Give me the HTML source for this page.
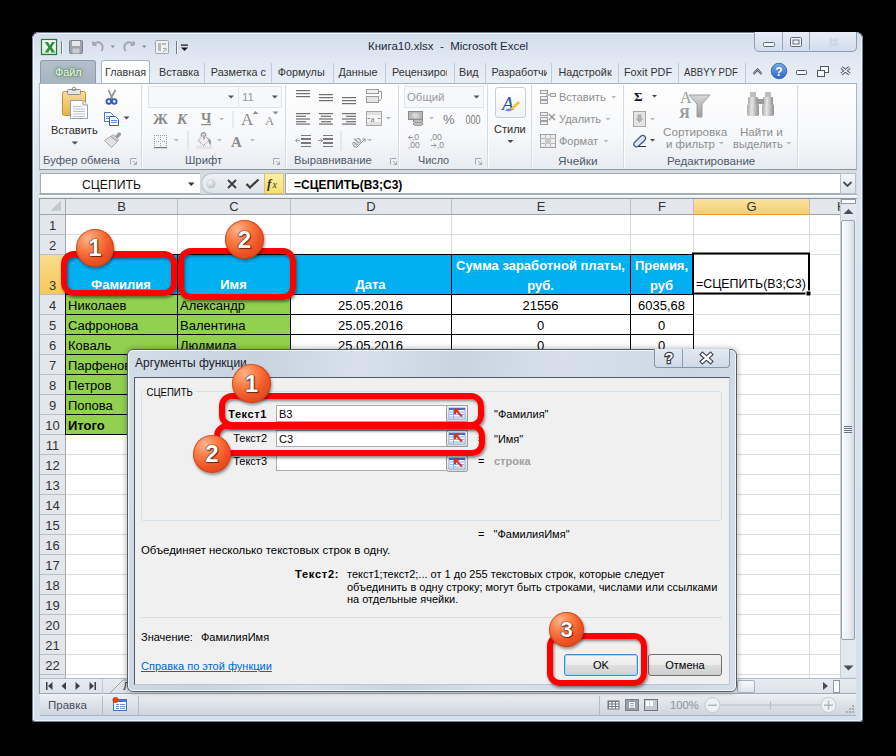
<!DOCTYPE html>
<html><head><meta charset="utf-8">
<style>
*{margin:0;padding:0;box-sizing:border-box}
html,body{width:896px;height:756px;overflow:hidden;background:#000}
body{position:relative;font-family:"Liberation Sans",sans-serif;font-size:12px;color:#222}
.a{position:absolute}
.nw{white-space:nowrap}
#win{left:32px;top:32px;width:831px;height:690px;border-radius:7px 7px 4px 4px;background:linear-gradient(#d2ddea,#dfe7f1 25px,#e9eff6 50px,#dbe5f0 120px,#d3dfec);box-shadow:inset 0 0 0 1px #6e7d90,inset 0 0 0 2px #f3f7fb}
#title{left:368px;top:40.2px;font-size:11.5px;color:#1e2b3a}
.tab{top:60px;height:23px;font-size:12.5px;color:#2f2f2f;text-align:center;line-height:23px;overflow:hidden}
.tdiv{top:63px;width:1px;height:20px;background:#c2cad6}
#ribbon{left:39px;top:83px;width:818px;height:87px;background:linear-gradient(#fefefe,#f7f8fa 60%,#e8ebf0);border:1px solid #aab5c3;border-bottom:1px solid #8d949c}
.gsep{top:85px;width:1px;height:83px;background:#d5dae0;box-shadow:1px 0 0 #fbfcfd}
.gl{top:154px;height:15px;font-size:12px;color:#4b5765;text-align:center}
.cellt{font-size:14px}
.colh{top:199px;height:16px;border-right:1px solid #b9bec5;border-bottom:1px solid #9fa5ad;font-size:13px;color:#333;text-align:center;line-height:15px}
.rowh{left:40px;width:26px;border-right:1px solid #a3a9b1;border-bottom:1px solid #b9bec5;font-size:13px;color:#333;text-align:center}
</style></head><body>

<div id="win" class="a"></div>
<div id="title" class="a nw">Книга10.xlsx&nbsp; - &nbsp;Microsoft Excel</div>

<!-- caption buttons -->
<div class="a" style="left:754px;top:32px;width:103px;height:20px;border:1px solid #8d9cb0;border-top:none;border-radius:0 0 5px 5px;background:linear-gradient(#e6edf6,#d2ddeb)"></div>
<div class="a" style="left:782px;top:32px;width:1px;height:18px;background:#9aa8ba"></div>
<div class="a" style="left:809px;top:32px;width:1px;height:18px;background:#9aa8ba"></div>

<!-- tabs -->
<div class="a" style="left:40px;top:60px;width:56px;height:24px;background:linear-gradient(#b4bfcb,#a8b4c1);border-radius:3px 3px 0 0;border:1px solid #8e9aa8;border-bottom:none"></div>
<div class="a nw" style="left:55px;top:65.5px;font-size:10.8px;color:#f6fff2;text-shadow:0 0 2px #2c6e26,0 0 4px #3d8a35">Файл</div>
<div class="a" style="left:101px;top:60px;width:49px;height:25px;background:linear-gradient(#fff,#fdfdfe);border:1px solid #aab5c3;border-bottom:none;border-radius:3px 3px 0 0"></div>
<div class="a nw" style="left:105px;top:65.5px;font-size:10.8px;color:#333">Главная</div>
<div class="a nw" style="left:159px;top:65.5px;font-size:10.8px;color:#333">Вставка</div>
<div class="a tdiv" style="left:204px"></div>
<div class="a nw" style="left:210.8px;top:65.5px;width:55.5px;overflow:hidden;font-size:10.8px;color:#333">Разметка страницы</div>
<div class="a tdiv" style="left:271px"></div>
<div class="a nw" style="left:277.7px;top:65.5px;width:200px;overflow:hidden;font-size:10.8px;color:#333">Формулы</div>
<div class="a tdiv" style="left:333px"></div>
<div class="a nw" style="left:338.4px;top:65.5px;width:200px;overflow:hidden;font-size:10.8px;color:#333">Данные</div>
<div class="a tdiv" style="left:385px"></div>
<div class="a nw" style="left:392px;top:65.5px;width:55px;overflow:hidden;font-size:10.8px;color:#333">Рецензирование</div>
<div class="a tdiv" style="left:454px"></div>
<div class="a nw" style="left:459px;top:65.5px;width:200px;overflow:hidden;font-size:10.8px;color:#333">Вид</div>
<div class="a tdiv" style="left:485px"></div>
<div class="a nw" style="left:491.4px;top:65.5px;width:55.5px;overflow:hidden;font-size:10.8px;color:#333">Разработчик</div>
<div class="a tdiv" style="left:551px"></div>
<div class="a nw" style="left:558.4px;top:65.5px;width:54px;overflow:hidden;font-size:10.8px;color:#333">Надстройки</div>
<div class="a tdiv" style="left:618px"></div>
<div class="a nw" style="left:624px;top:65.5px;width:200px;overflow:hidden;font-size:10.8px;color:#333">Foxit PDF</div>
<div class="a tdiv" style="left:678px"></div>
<div class="a nw" style="left:684.4px;top:65.5px;width:200px;overflow:hidden;font-size:10.8px;color:#333" ><span style="display:inline-block;transform:scaleX(.89);transform-origin:0 0">ABBYY PDF</span></div>
<div class="a tdiv" style="left:745px"></div>
<!-- ribbon -->
<div id="ribbon" class="a"></div>
<div class="a gsep" style="left:141px"></div>
<div class="a gsep" style="left:285px"></div>
<div class="a gsep" style="left:398px"></div>
<div class="a gsep" style="left:487px"></div>
<div class="a gsep" style="left:531px"></div>
<div class="a gsep" style="left:623px"></div>
<div class="a gsep" style="left:797px"></div>

<!-- formula bar -->
<div class="a" style="left:39px;top:170px;width:818px;height:29px;background:#d6dbe1"></div>
<div class="a" style="left:40px;top:173px;width:160px;height:21px;background:#fff;border:1px solid #a4aab2;border-right:none"></div>
<div class="a nw" style="left:82px;top:178px;font-size:12.2px;color:#111">СЦЕПИТЬ</div>
<div class="a" style="left:201px;top:173px;width:64px;height:21px;background:linear-gradient(#eef1f5,#dfe4ea);border:1px solid #b6bfca;border-right:none;border-radius:11px 0 0 11px"></div>
<div class="a" style="left:264px;top:173px;width:20px;height:21px;background:linear-gradient(#fdf0a6,#f8de6e);border:1px solid #d6c07a"></div>
<div class="a" style="left:285px;top:173px;width:556px;height:21px;background:#fff;border:1px solid #a4aab2"></div>
<div class="a nw" style="left:294px;top:178.4px;font-size:12px;font-weight:bold;color:#000">=СЦЕПИТЬ(B3;C3)</div>
<div class="a" style="left:840px;top:173px;width:16px;height:21px;background:linear-gradient(#f3f5f8,#dfe5ec);border:1px solid #b6bfca"></div>

<!-- grid area -->
<div class="a" style="left:40px;top:199px;width:800px;height:480px;background:#fff"></div>
<style>
.rt{position:absolute;white-space:nowrap;font-size:11.3px;color:#8e8e8e}
.rd{color:#2b2b2b}
.gl2{position:absolute;white-space:nowrap;font-size:11.3px;color:#4f5a68;top:154px}
</style>
<!-- group labels -->
<div class="gl2" style="left:43px">Буфер обмена</div>
<div class="gl2" style="left:185px">Шрифт</div>
<div class="gl2" style="left:294px">Выравнивание</div>
<div class="gl2" style="left:418px;font-size:10.8px">Число</div>
<div class="gl2" style="left:558px;font-size:11.8px">Ячейки</div>
<div class="gl2" style="left:667px;font-size:11.6px">Редактирование</div>
<!-- combos -->
<div class="a" style="left:148px;top:86px;width:91px;height:22px;border:1px solid #dfe4ea;background:#f7f8fa"></div>
<div class="a" style="left:238px;top:86px;width:44px;height:22px;border:1px solid #dfe4ea;background:#f7f8fa"></div>
<div class="a" style="left:404px;top:86px;width:80px;height:22px;border:1px solid #dfe4ea;background:#f7f8fa"></div>
<div class="a" style="left:404px;top:91px;width:80px;height:14px"></div>
<!-- texts -->
<div class="rt rd" style="left:51px;top:124px;font-size:11px">Вставить</div>
<div class="rt" style="left:559px;top:90.5px;font-size:11px">Вставить</div>
<div class="rt" style="left:559px;top:112.5px;font-size:11px">Удалить</div>
<div class="rt" style="left:559px;top:134.5px;font-size:11px">Формат</div>
<div class="rt rd" style="left:494px;top:123px;font-size:11px">Стили</div>
<div class="rt" style="left:663px;top:124.5px;font-size:11.7px">Сортировка</div>
<div class="rt" style="left:666px;top:138px;font-size:11.5px">и фильтр</div>
<div class="rt" style="left:740px;top:124.5px;font-size:11.6px">Найти и</div>
<div class="rt" style="left:733px;top:138px;font-size:11.1px">выделить</div>
<div class="rt" style="left:407px;top:91px;font-size:11.4px;color:#9a9a9a">Общий</div>
<div class="rt" style="left:242px;top:91px;font-size:11.4px;color:#9a9a9a">11</div>
<!-- styles button -->
<div class="a" style="left:495px;top:87px;width:31px;height:31px;border:1px solid #c9ced5;border-radius:3px;background:linear-gradient(#fff,#f1f3f6)"></div>
<svg class="a" style="left:0;top:0" width="896" height="200">
<defs>
<linearGradient id="gBoard" x1="0" y1="0" x2="0" y2="1"><stop offset="0" stop-color="#f8dc98"/><stop offset="1" stop-color="#e8b24e"/></linearGradient>
<linearGradient id="gGray" x1="0" y1="0" x2="0" y2="1"><stop offset="0" stop-color="#d8d8d8"/><stop offset="1" stop-color="#9a9a9a"/></linearGradient>
<linearGradient id="gBin" x1="0" y1="0" x2="1" y2="0"><stop offset="0" stop-color="#a9a9a9"/><stop offset=".4" stop-color="#e6e6e6"/><stop offset="1" stop-color="#8f8f8f"/></linearGradient>
</defs>
<!-- paste -->
<rect x="62.5" y="91.5" width="23" height="24" rx="2" fill="url(#gBoard)" stroke="#c4913a"/>
<rect x="67.5" y="89.5" width="13" height="5" rx="1" fill="#e4e4e4" stroke="#8d8d8d"/>
<circle cx="74" cy="89" r="1.8" fill="none" stroke="#8d8d8d"/>
<path d="M70.5 100.5 H83 L87.5 105 V118.5 H70.5 Z" fill="#fff" stroke="#98a0aa"/>
<path d="M83 100.5 V105 H87.5" fill="#e8ecf0" stroke="#98a0aa"/>
<g fill="#b9c2cc"><rect x="73" y="106" width="9" height="1"/><rect x="73" y="108.5" width="12" height="1"/><rect x="73" y="111" width="12" height="1"/><rect x="73" y="113.5" width="12" height="1"/><rect x="73" y="116" width="12" height="1"/></g>
<path d="M71.5 141.5 H78 L74.75 144.5 Z" fill="#4a4a4a"/>
<!-- scissors -->
<path d="M108.5 90 L112.5 99 M115.5 90 L110.5 99" stroke="#8a8f96" stroke-width="1.6"/>
<circle cx="108.8" cy="101.5" r="2.3" fill="none" stroke="#2d58b8" stroke-width="1.8"/>
<circle cx="114.3" cy="101.5" r="2.3" fill="none" stroke="#2d58b8" stroke-width="1.8"/>
<!-- copy -->
<path d="M104.5 112.5 H110.5 L113.5 115.5 V121.5 H104.5 Z" fill="#fff" stroke="#4a74c9"/>
<path d="M109.5 116.5 H115.5 L118.5 119.5 V125.5 H109.5 Z" fill="#fff" stroke="#2f5cb8"/>
<g fill="#5a86d6"><rect x="106" y="116" width="3" height="1"/><rect x="106" y="118" width="3" height="1"/><rect x="111" y="120" width="6" height="1"/><rect x="111" y="122" width="6" height="1"/></g>
<path d="M123.5 116.5 H129.5 L126.5 119.5 Z" fill="#4a4a4a"/>
<!-- format painter -->
<path d="M116 137.5 L119.3 134.2" stroke="#9c9c9c" stroke-width="3.6" stroke-linecap="round"/>
<path d="M110.5 136.5 L113.5 134.5 L118.5 139.5 L117.5 141.5 Z" fill="#cfcfcf" stroke="#a4a4a4" stroke-width=".8"/>
<path d="M104.5 140.5 L110.5 136.5 L117.5 141.5 L111.5 147.5 Z" fill="#e4e1e5" stroke="#a8a8a8"/>
<!-- launchers -->
<g fill="none" stroke="#a4aab2" stroke-width="1">
<path d="M130.5 164.5 V158.5 H136.5 M133 161 L136.5 164.5 M136.5 161.5 V164.5 H133.5"/>
<path d="M273.5 164.5 V158.5 H279.5 M276 161 L279.5 164.5 M279.5 161.5 V164.5 H276.5"/>
<path d="M390.5 164.5 V158.5 H396.5 M393 161 L396.5 164.5 M396.5 161.5 V164.5 H393.5"/>
<path d="M475.5 164.5 V158.5 H481.5 M478 161 L481.5 164.5 M481.5 161.5 V164.5 H478.5"/>
</g>
<!-- font group -->
<g fill="#555">
<path d="M228 95.5 H234 L231 98.5 Z"/><path d="M271.8 95.5 H277.8 L274.8 98.5 Z"/>
</g>
<g fill="#b5b9bf">
<path d="M219 118 H224 L221.5 120.5 Z"/><path d="M173.8 139 H178.8 L176.3 141.5 Z"/><path d="M217 139 H222 L219.5 141.5 Z"/><path d="M250 139 H255 L252.5 141.5 Z"/>
<path d="M386 117 H391 L388.5 119.5 Z"/><path d="M367.2 139 H372.2 L369.7 141.5 Z"/><path d="M429.1 117 H434.1 L431.6 119.5 Z"/>
<path d="M611.2 96 H616.2 L613.7 98.5 Z"/><path d="M605.5 118 H610.5 L608 120.5 Z"/><path d="M603.5 140 H608.5 L606 142.5 Z"/>
<path d="M650 118 H655 L652.5 120.5 Z"/><path d="M718.9 142 H723.9 L721.4 144.5 Z"/><path d="M786.2 142 H791.2 L788.7 144.5 Z"/>
</g>
<rect x="232.5" y="111" width="1" height="17" fill="#d5d9de"/>
<rect x="187.5" y="131" width="1" height="20" fill="#d5d9de"/>
<rect x="340.5" y="131" width="1" height="20" fill="#d5d9de"/>
<text x="153" y="124" font-family="Liberation Serif" font-weight="bold" font-size="15" fill="#8c8c8c">Ж</text>
<text x="177" y="124" font-family="Liberation Serif" font-weight="bold" font-style="italic" font-size="15" fill="#8c8c8c">К</text>
<text x="201" y="123" font-family="Liberation Serif" font-weight="bold" font-size="14" fill="#8c8c8c">Ч</text>
<rect x="201" y="124" width="10" height="1.2" fill="#8c8c8c"/>
<text x="241" y="125" font-family="Liberation Serif" font-size="17" fill="#8c8c8c">A</text>
<path d="M252.5 114 L255.5 111 L258.5 114 Z" fill="#8c8c8c"/>
<text x="265" y="125" font-family="Liberation Serif" font-size="12.5" fill="#8c8c8c">A</text>
<path d="M272.5 111.5 H278.5 L275.5 114.5 Z" fill="#8c8c8c"/>
<!-- borders icon -->
<g fill="#9a9a9a"><rect x="154" y="135" width="1" height="1"/><rect x="156" y="135" width="1" height="1"/><rect x="158" y="135" width="1" height="1"/><rect x="160" y="135" width="1" height="1"/><rect x="162" y="135" width="1" height="1"/><rect x="164" y="135" width="1" height="1"/>
<rect x="154" y="141" width="1" height="1"/><rect x="156" y="141" width="1" height="1"/><rect x="158" y="141" width="1" height="1"/><rect x="162" y="141" width="1" height="1"/><rect x="164" y="141" width="1" height="1"/><rect x="166" y="141" width="1" height="1"/>
<rect x="154" y="137" width="1" height="1"/><rect x="154" y="139" width="1" height="1"/><rect x="154" y="143" width="1" height="1"/><rect x="154" y="145" width="1" height="1"/>
<rect x="166" y="135" width="1" height="1"/><rect x="166" y="137" width="1" height="1"/><rect x="166" y="139" width="1" height="1"/><rect x="166" y="143" width="1" height="1"/><rect x="166" y="145" width="1" height="1"/>
<rect x="160" y="137" width="1" height="1"/><rect x="160" y="139" width="1" height="1"/><rect x="160" y="143" width="1" height="1"/><rect x="160" y="145" width="1" height="1"/>
</g>
<rect x="154" y="147" width="13" height="1.2" fill="#777"/>
<!-- fill bucket -->
<rect x="196" y="145.5" width="16" height="3.3" fill="#e9e3e7"/>
<path d="M198 140.4 L203.5 135 L209.5 140 L203.5 145.5 Z" fill="#f2eef2" stroke="#8c8c8c" stroke-dasharray="1.2 .6"/>
<path d="M201.2 136.5 Q201 132.8 203.3 132.6 Q205.8 132.6 205.8 136" fill="none" stroke="#8f8f8f" stroke-width="1.2"/>
<path d="M204 135.5 V139.5" stroke="#a0a0a0" stroke-width="1.6"/>
<path d="M208.5 138 Q212.2 140 210.6 145.5 Q208.3 143.5 208.4 140.5 Z" fill="#9a9a9a"/>
<text x="231" y="147" font-family="Liberation Serif" font-weight="bold" font-size="15" fill="#8c8c8c">A</text>
<!-- alignment -->
<g fill="#6f6f6f">
<rect x="296" y="90" width="14" height="1.2"/><rect x="296" y="93" width="14" height="1.2"/><rect x="296" y="96" width="14" height="1.2"/>
<rect x="319" y="94" width="14" height="1.2"/><rect x="319" y="97" width="14" height="1.2"/><rect x="319" y="100" width="14" height="1.2"/>
<rect x="342" y="97" width="14" height="1.2"/><rect x="342" y="100" width="14" height="1.2"/><rect x="342" y="103" width="14" height="1.2"/>
<rect x="296" y="113" width="14" height="1.2"/><rect x="296" y="115.7" width="10" height="1.2"/><rect x="296" y="118.4" width="14" height="1.2"/><rect x="296" y="121.1" width="10" height="1.2"/><rect x="296" y="123.5" width="14" height="1.2"/>
<rect x="319" y="113" width="14" height="1.2"/><rect x="321" y="115.7" width="10" height="1.2"/><rect x="319" y="118.4" width="14" height="1.2"/><rect x="321" y="121.1" width="10" height="1.2"/><rect x="319" y="123.5" width="14" height="1.2"/>
<rect x="342" y="113" width="14" height="1.2"/><rect x="346" y="115.7" width="10" height="1.2"/><rect x="342" y="118.4" width="14" height="1.2"/><rect x="346" y="121.1" width="10" height="1.2"/><rect x="342" y="123.5" width="14" height="1.2"/>
</g>
<!-- wrap text -->
<rect x="366.5" y="89.5" width="12" height="4" fill="#f0f0f0" stroke="#9a9a9a"/>
<rect x="366.5" y="96.5" width="12" height="6" fill="#e6e6e6" stroke="#9a9a9a"/>
<path d="M378.5 91.5 H381.5 V99 L379 101" fill="none" stroke="#9a9a9a"/>
<!-- merge -->
<rect x="366.5" y="111.5" width="15" height="14" fill="#e0e0e0" stroke="#a5a5a5"/>
<rect x="367" y="115" width="14" height="7" fill="#f4f4f4"/>
<text x="370.5" y="121.5" font-family="Liberation Serif" font-size="9" fill="#7a7a7a">a</text>
<path d="M367.5 118.5 H370 M378 118.5 H380.5" stroke="#8a8a8a"/>
<!-- indent -->
<g fill="#7a7a7a">
<rect x="301" y="135" width="10" height="1"/><rect x="301" y="138" width="10" height="2"/><rect x="301" y="142" width="10" height="2"/><rect x="301" y="146" width="10" height="1"/>
<rect x="323" y="135" width="10" height="1"/><rect x="323" y="138" width="10" height="2"/><rect x="323" y="142" width="10" height="2"/><rect x="323" y="146" width="10" height="1"/>
</g>
<path d="M300 140.5 H295.5 M297.5 138.5 L295.5 140.5 L297.5 142.5" fill="none" stroke="#9a9a9a"/>
<path d="M318 140.5 H322.5 M320.5 138.5 L322.5 140.5 L320.5 142.5" fill="none" stroke="#9a9a9a"/>
<!-- ab -->
<text x="350" y="145" font-family="Liberation Sans" font-size="9.5" fill="#8a8a8a" transform="rotate(-45 356 141)">ab</text>
<path d="M356 148 L365 139 M362 139 H365 V142" fill="none" stroke="#9a9a9a"/>
<!-- number -->
<path d="M473.5 95.5 H479.5 L476.5 98.5 Z" fill="#555"/>
<rect x="408.5" y="111.5" width="14" height="8" fill="#b8b8b8" stroke="#8a8a8a"/>
<ellipse cx="415.5" cy="115.5" rx="3.5" ry="2.5" fill="#d8d8d8"/>
<ellipse cx="418" cy="121" rx="5" ry="1.5" fill="#c8c8c8" stroke="#8f8f8f"/>
<ellipse cx="418" cy="124" rx="5" ry="1.5" fill="#c8c8c8" stroke="#8f8f8f"/>
<text x="443" y="124" font-family="Liberation Sans" font-size="13" fill="#7a7a7a">%</text>
<text x="465.5" y="124" font-family="Liberation Sans" font-size="12" fill="#7a7a7a" textLength="15" lengthAdjust="spacingAndGlyphs">000</text>
<text x="412" y="140" font-family="Liberation Sans" font-size="8.5" fill="#8a8a8a">,0</text>
<path d="M413 137.5 H408.5 M410.5 135.5 L408.5 137.5 L410.5 139.5" fill="none" stroke="#9a9a9a"/>
<text x="408" y="148" font-family="Liberation Sans" font-size="8.5" fill="#8a8a8a">,00</text>
<text x="430" y="140" font-family="Liberation Sans" font-size="8.5" fill="#8a8a8a">,00</text>
<text x="437" y="148" font-family="Liberation Sans" font-size="8.5" fill="#8a8a8a">,0</text>
<path d="M431 145.5 H436 M434 143.5 L436 145.5 L434 147.5" fill="none" stroke="#9a9a9a"/>
<!-- styles A -->
<text x="502" y="110" font-family="Liberation Serif" font-style="italic" font-size="19" fill="#2d55a8">A</text>
<path d="M509 110 L518 101 L520 103 L511 111 Z" fill="#f1c232"/>
<path d="M505 110.5 Q509 107 512 110 Q509 112 505 110.5 Z" fill="#5d88d8"/>
<path d="M507.5 140 H513.5 L510.5 143 Z" fill="#4a4a4a"/>
<!-- cells icons -->
<g fill="#eee" stroke="#a0a0a0">
<rect x="540.5" y="90.5" width="7" height="3"/><rect x="540.5" y="96.5" width="7" height="3"/><rect x="540.5" y="100.5" width="7" height="3"/>
<rect x="550.5" y="93.5" width="5" height="3"/>
<rect x="540.5" y="112.5" width="7" height="3"/><rect x="540.5" y="117.5" width="7" height="3"/><rect x="540.5" y="121.5" width="7" height="3"/>
<rect x="540.5" y="134.5" width="15" height="13"/>
</g>
<path d="M546 95 H550" stroke="#8a8a8a"/>
<path d="M549 114 L555 120 M555 114 L549 120" stroke="#9a9a9a" stroke-width="1.5"/>
<path d="M545.5 134.5 V147.5 M550.5 134.5 V147.5 M540.5 138.5 H555.5 M540.5 143.5 H555.5" stroke="#b8b8b8"/>
<rect x="545" y="138" width="6" height="6" fill="#c8c8c8"/>
<!-- editing -->
<text x="634" y="101" font-family="Liberation Serif" font-weight="bold" font-size="13" fill="#111">Σ</text>
<path d="M652 95 H657 L654.5 97.5 Z" fill="#444"/>
<rect x="633.5" y="111.5" width="12" height="15" fill="#e4e4e4" stroke="#a8a8a8"/>
<path d="M637.5 114.5 H641.5 V118.5 H643.5 L639.5 123 L635.5 118.5 H637.5 Z" fill="#b0b0b0"/>
<path d="M634 143 L641 136 Q643 134.5 645 136.5 Q646.5 138.5 644.5 140.5 L638 146.5 Q636 147.5 634.5 146 Q633 144.5 634 143 Z" fill="#dfe6f2" stroke="#3d5590" stroke-width="1.2"/>
<rect x="638" y="146" width="8" height="1" fill="#333"/>
<path d="M650 139 H655 L652.5 141.5 Z" fill="#444"/>
<!-- sort -->
<text x="680" y="103" font-family="Liberation Serif" font-size="16" fill="#9a9a9a">A</text>
<text x="679" y="118" font-family="Liberation Serif" font-weight="bold" font-size="15" fill="#9a9a9a">Я</text>
<path d="M689 95 H710 L702 104 V117 H697 V104 Z" fill="url(#gGray)" stroke="#9e9e9e"/>
<!-- binoculars -->
<rect x="750" y="92" width="6" height="6" rx="1" fill="#bdbdbd"/>
<rect x="765" y="92" width="6" height="6" rx="1" fill="#bdbdbd"/>
<rect x="748" y="97" width="10" height="9" rx="1" fill="url(#gBin)"/>
<rect x="763" y="97" width="10" height="9" rx="1" fill="url(#gBin)"/>
<rect x="757" y="99" width="7" height="5" fill="#9a9a9a"/>
<rect x="747" y="104" width="12" height="12" rx="2" fill="url(#gBin)"/>
<rect x="762" y="104" width="12" height="12" rx="2" fill="url(#gBin)"/>
</svg>
<svg class="a" style="left:0;top:0" width="896" height="200">
<defs>
<linearGradient id="gHelp" x1="0" y1="0" x2="0" y2="1"><stop offset="0" stop-color="#79a8ec"/><stop offset="1" stop-color="#2f64c4"/></linearGradient>
<linearGradient id="gXl" x1="0" y1="0" x2="0" y2="1"><stop offset="0" stop-color="#ffffff"/><stop offset="1" stop-color="#d9ecd9"/></linearGradient>
</defs>
<!-- QAT -->
<rect x="41.5" y="39.5" width="15" height="15" fill="url(#gXl)" stroke="#1f7a35" stroke-width="1.2"/>
<path d="M44.5 42 H48 L50 45.5 L52 42 H55 L51.7 47.2 L55.2 52.5 H51.7 L50 49.2 L48.2 52.5 H44.7 L48.3 47.2 Z" fill="#2c8f3c"/>
<rect x="61" y="41" width="1" height="13" fill="#6f7a88"/>
<rect x="62" y="41" width="1" height="13" fill="#f4f8fc"/>
<rect x="69.5" y="40.5" width="13" height="13" rx="1" fill="#9da3aa" stroke="#7c838c"/>
<rect x="72" y="41" width="8" height="5" fill="#e6e8ea"/>
<rect x="72.5" y="48.5" width="7" height="5" fill="#c8ccd0"/>
<path d="M93 45 Q97 40.5 101 43.5 Q104 46.5 101.5 51 M93 45 V41.5 M93 45 H96.5" fill="none" stroke="#a3a9b0" stroke-width="2"/>
<path d="M110.5 45.5 H115 L112.75 48 Z" fill="#8a9099"/>
<path d="M134 45 Q130 40.5 126 43.5 Q123 46.5 125.5 51 M134 45 V41.5 M134 45 H130.5" fill="none" stroke="#a3a9b0" stroke-width="2"/>
<path d="M142 45.5 H146.5 L144.25 48 Z" fill="#8a9099"/>
<rect x="155.5" y="40.5" width="13" height="13" rx="1" fill="#eef0f2" stroke="#9da3aa"/>
<rect x="158" y="43" width="3" height="8" fill="#b5bac0"/><rect x="162" y="43" width="4" height="2" fill="#b5bac0"/>
<path d="M163 48.5 H166 V51 M165 50 L163 52" fill="none" stroke="#9da3aa"/>
<rect x="176" y="41" width="1" height="13" fill="#6f7a88"/>
<rect x="177" y="41" width="1" height="13" fill="#f4f8fc"/>
<rect x="181" y="44.5" width="7" height="1.2" fill="#111"/>
<path d="M181 47.5 H188 L184.5 51 Z" fill="#111"/>
<!-- caption glyphs -->
<rect x="763.5" y="42.5" width="11" height="4" rx="1" fill="#f2f5f8" stroke="#5e6a78"/>
<rect x="790.5" y="37.5" width="11" height="9" rx="1" fill="#f2f5f8" stroke="#5e6a78"/>
<rect x="793" y="40" width="6" height="4" fill="none" stroke="#5e6a78"/>
<path d="M829.5 38.5 L837.5 46 M837.5 38.5 L829.5 46" stroke="#bcc6d2" stroke-width="3"/>
<path d="M829.5 38.5 L837.5 46 M837.5 38.5 L829.5 46" stroke="#dfe6ee" stroke-width="1.4"/>
<!-- tab row icons -->
<path d="M753.5 74 L757.5 69.5 L761.5 74" fill="none" stroke="#333c48" stroke-width="2"/>
<path d="M753.5 74 L757.5 69.5 L761.5 74" fill="none" stroke="#f4f6f8" stroke-width=".7"/>
<circle cx="779" cy="71" r="7.8" fill="url(#gHelp)" stroke="#2d5db3" stroke-width=".8"/>
<text x="779" y="75.5" text-anchor="middle" font-family="Liberation Sans" font-weight="bold" font-size="12" fill="#fff">?</text>
<rect x="796.5" y="70.5" width="10" height="4" rx="1" fill="#f4f6f8" stroke="#4c5562"/>
<rect x="820.5" y="66.5" width="8" height="6" fill="#f4f6f8" stroke="#4c5562"/>
<rect x="817.5" y="70.5" width="7" height="6" fill="#f4f6f8" stroke="#4c5562"/>
<path d="M841.5 67.5 L849.5 74 M849.5 67.5 L841.5 74" stroke="#4c5562" stroke-width="3.4"/>
<path d="M841.5 67.5 L849.5 74 M849.5 67.5 L841.5 74" stroke="#f4f6f8" stroke-width="1.4"/>
<!-- formula bar -->
<path d="M188 182.5 H194.5 L191.25 186 Z" fill="#333"/>
<radialGradient id="gDot" cx=".4" cy=".35" r=".7"><stop offset="0" stop-color="#f4f5f6"/><stop offset="1" stop-color="#b9bdc2"/></radialGradient><circle cx="211" cy="183.7" r="4.5" fill="url(#gDot)"/>
<path d="M228 180 L236 188 M236 180 L228 188" stroke="#3a3a3a" stroke-width="1.8"/>
<path d="M246.5 184 L250 187.5 L258.5 179.5" fill="none" stroke="#3a3a3a" stroke-width="2.2"/>
<text x="267" y="188" font-family="Liberation Serif" font-style="italic" font-weight="bold" font-size="13" fill="#333">f</text>
<text x="272.5" y="188" font-family="Liberation Serif" font-style="italic" font-size="10" fill="#333">x</text>
<path d="M843.5 182 L847.5 186 L851.5 182" fill="none" stroke="#4a4f57" stroke-width="1.8"/>
</svg>
<svg class="a" style="left:0;top:0" width="896" height="756"><rect x="66" y="234" width="774" height="1" fill="#dadcdd"/><rect x="66" y="254" width="774" height="1" fill="#dadcdd"/><rect x="66" y="294" width="774" height="1" fill="#dadcdd"/><rect x="66" y="314" width="774" height="1" fill="#dadcdd"/><rect x="66" y="334" width="774" height="1" fill="#dadcdd"/><rect x="66" y="354" width="774" height="1" fill="#dadcdd"/><rect x="66" y="374" width="774" height="1" fill="#dadcdd"/><rect x="66" y="394" width="774" height="1" fill="#dadcdd"/><rect x="66" y="414" width="774" height="1" fill="#dadcdd"/><rect x="66" y="434" width="774" height="1" fill="#dadcdd"/><rect x="66" y="454" width="774" height="1" fill="#dadcdd"/><rect x="66" y="474" width="774" height="1" fill="#dadcdd"/><rect x="66" y="494" width="774" height="1" fill="#dadcdd"/><rect x="66" y="514" width="774" height="1" fill="#dadcdd"/><rect x="66" y="534" width="774" height="1" fill="#dadcdd"/><rect x="66" y="554" width="774" height="1" fill="#dadcdd"/><rect x="66" y="574" width="774" height="1" fill="#dadcdd"/><rect x="66" y="594" width="774" height="1" fill="#dadcdd"/><rect x="66" y="614" width="774" height="1" fill="#dadcdd"/><rect x="66" y="634" width="774" height="1" fill="#dadcdd"/><rect x="66" y="654" width="774" height="1" fill="#dadcdd"/><rect x="66" y="674" width="774" height="1" fill="#dadcdd"/><rect x="177" y="214" width="1" height="465" fill="#dadcdd"/><rect x="290" y="214" width="1" height="465" fill="#dadcdd"/><rect x="451" y="214" width="1" height="465" fill="#dadcdd"/><rect x="630" y="214" width="1" height="465" fill="#dadcdd"/><rect x="693" y="214" width="1" height="465" fill="#dadcdd"/><rect x="809" y="214" width="1" height="465" fill="#dadcdd"/><rect x="840" y="214" width="1" height="465" fill="#dadcdd"/></svg>
<div class="a" style="left:39px;top:194px;width:818px;height:5px;background:linear-gradient(#fff,#e3e9f2);border-top:1px solid #a9b0b9;border-bottom:1px solid #8f969e"></div>
<div class="a" style="left:39px;top:199px;width:1px;height:495px;background:#8f969e"></div>
<div class="a" style="left:40px;top:199px;width:26px;height:16px;background:#e3e6eb;border-right:1px solid #a3a9b1;border-bottom:1px solid #9fa5ad"></div>
<svg class="a" style="left:50px;top:200px" width="12" height="12"><path d="M11 0.5 L11 10.7 L0.5 10.7 Z" fill="#c4c8cd"/></svg>
<div class="a colh" style="left:66px;width:112px;background:#e3e6eb;border-bottom-color:#9fa5ad">B</div>
<div class="a colh" style="left:178px;width:113px;background:#e3e6eb;border-bottom-color:#9fa5ad">C</div>
<div class="a colh" style="left:291px;width:161px;background:#e3e6eb;border-bottom-color:#9fa5ad">D</div>
<div class="a colh" style="left:452px;width:179px;background:#e3e6eb;border-bottom-color:#9fa5ad">E</div>
<div class="a colh" style="left:631px;width:63px;background:#e3e6eb;border-bottom-color:#9fa5ad">F</div>
<div class="a colh" style="left:694px;width:116px;background:linear-gradient(#f9e3a3,#f5cf6e);border-bottom-color:#f29436">G</div>
<div class="a colh" style="left:810px;width:31px;background:#e3e6eb;border-bottom-color:#9fa5ad"></div>
<div class="a rowh" style="top:215px;height:20px;background:#e3e6eb;border-right-color:#a3a9b1;line-height:20px;padding-top:1px">1</div>
<div class="a rowh" style="top:235px;height:20px;background:#e3e6eb;border-right-color:#a3a9b1;line-height:20px;padding-top:1px">2</div>
<div class="a rowh" style="top:255px;height:40px;background:linear-gradient(#f9dc8c,#f5c95c);border-right-color:#f29436;line-height:20px;padding-top:21px">3</div>
<div class="a rowh" style="top:295px;height:20px;background:#e3e6eb;border-right-color:#a3a9b1;line-height:20px;padding-top:1px">4</div>
<div class="a rowh" style="top:315px;height:20px;background:#e3e6eb;border-right-color:#a3a9b1;line-height:20px;padding-top:1px">5</div>
<div class="a rowh" style="top:335px;height:20px;background:#e3e6eb;border-right-color:#a3a9b1;line-height:20px;padding-top:1px">6</div>
<div class="a rowh" style="top:355px;height:20px;background:#e3e6eb;border-right-color:#a3a9b1;line-height:20px;padding-top:1px">7</div>
<div class="a rowh" style="top:375px;height:20px;background:#e3e6eb;border-right-color:#a3a9b1;line-height:20px;padding-top:1px">8</div>
<div class="a rowh" style="top:395px;height:20px;background:#e3e6eb;border-right-color:#a3a9b1;line-height:20px;padding-top:1px">9</div>
<div class="a rowh" style="top:415px;height:20px;background:#e3e6eb;border-right-color:#a3a9b1;line-height:20px;padding-top:1px">10</div>
<div class="a rowh" style="top:435px;height:20px;background:#e3e6eb;border-right-color:#a3a9b1;line-height:20px;padding-top:1px">11</div>
<div class="a rowh" style="top:455px;height:20px;background:#e3e6eb;border-right-color:#a3a9b1;line-height:20px;padding-top:1px">12</div>
<div class="a rowh" style="top:475px;height:20px;background:#e3e6eb;border-right-color:#a3a9b1;line-height:20px;padding-top:1px">13</div>
<div class="a rowh" style="top:495px;height:20px;background:#e3e6eb;border-right-color:#a3a9b1;line-height:20px;padding-top:1px">14</div>
<div class="a rowh" style="top:515px;height:20px;background:#e3e6eb;border-right-color:#a3a9b1;line-height:20px;padding-top:1px">15</div>
<div class="a rowh" style="top:535px;height:20px;background:#e3e6eb;border-right-color:#a3a9b1;line-height:20px;padding-top:1px">16</div>
<div class="a rowh" style="top:555px;height:20px;background:#e3e6eb;border-right-color:#a3a9b1;line-height:20px;padding-top:1px">17</div>
<div class="a rowh" style="top:575px;height:20px;background:#e3e6eb;border-right-color:#a3a9b1;line-height:20px;padding-top:1px">18</div>
<div class="a rowh" style="top:595px;height:20px;background:#e3e6eb;border-right-color:#a3a9b1;line-height:20px;padding-top:1px">19</div>
<div class="a rowh" style="top:615px;height:20px;background:#e3e6eb;border-right-color:#a3a9b1;line-height:20px;padding-top:1px">20</div>
<div class="a rowh" style="top:635px;height:20px;background:#e3e6eb;border-right-color:#a3a9b1;line-height:20px;padding-top:1px">21</div>
<div class="a rowh" style="top:655px;height:20px;background:#e3e6eb;border-right-color:#a3a9b1;line-height:20px;padding-top:1px">22</div>
<div class="a rowh" style="top:675px;height:5px;background:#e3e6eb;border-right-color:#a3a9b1;line-height:5px;padding-top:1px"></div><!-- table fills -->
<div class="a" style="left:65px;top:254px;width:565px;height:40px;background:#00b0f0"></div>
<div class="a" style="left:630px;top:254px;width:63px;height:40px;background:#00b0f0"></div>
<div class="a" style="left:65px;top:294px;width:225px;height:140px;background:#92d050"></div>
<!-- table borders -->
<svg class="a" style="left:0;top:0" width="896" height="756">
<g fill="#000">
<rect x="65" y="254" width="629" height="1"/>
<rect x="65" y="294" width="629" height="1"/>
<rect x="65" y="314" width="629" height="1"/>
<rect x="65" y="334" width="629" height="1"/>
<rect x="65" y="354" width="629" height="1"/>
<rect x="65" y="374" width="629" height="1"/>
<rect x="65" y="394" width="629" height="1"/>
<rect x="65" y="414" width="629" height="1"/>
<rect x="65" y="434" width="629" height="1"/>
<rect x="65" y="254" width="1" height="181"/>
<rect x="177" y="254" width="1" height="181"/>
<rect x="290" y="254" width="1" height="181"/>
<rect x="451" y="254" width="1" height="181"/>
<rect x="630" y="254" width="1" height="181"/>
<rect x="693" y="254" width="1" height="181"/>
</g>
<!-- selection G3 -->
<rect x="693" y="253.5" width="116" height="40" fill="none" stroke="#000" stroke-width="2"/>
<rect x="806" y="291" width="5" height="5" fill="#000" stroke="#fff" stroke-width="1"/>
</svg>
<div class="a nw" style="left:65px;top:277px;width:112px;text-align:center;font-size:13px;font-weight:bold;color:#fff">Фамилия</div>
<div class="a nw" style="left:177px;top:277px;width:113px;text-align:center;font-size:13px;font-weight:bold;color:#fff">Имя</div>
<div class="a nw" style="left:290px;top:277px;width:161px;text-align:center;font-size:13px;font-weight:bold;color:#fff">Дата</div>
<div class="a nw" style="left:451px;top:256px;width:179px;text-align:center;font-size:13px;font-weight:bold;color:#fff;line-height:20px">Сумма заработной платы,<br>руб.</div>
<div class="a nw" style="left:630px;top:256px;width:63px;text-align:center;font-size:13px;font-weight:bold;color:#fff;line-height:20px">Премия,<br>руб</div>
<div class="a nw" style="left:696px;top:277px;font-size:12.4px;color:#000">=СЦЕПИТЬ(B3;C3)</div>
<div class="a" style="left:68px;top:296px;font-size:13px;color:#000;line-height:20px">Николаев<br>Сафронова<br>Коваль<br>Парфенов<br>Петров<br>Попова<br><b>Итого</b></div>
<div class="a" style="left:180px;top:296px;font-size:13px;color:#000;line-height:20px">Александр<br>Валентина<br>Людмила</div>
<div class="a" style="left:290px;top:296px;width:161px;text-align:center;font-size:13px;color:#000;line-height:20px">25.05.2016<br>25.05.2016<br>25.05.2016</div>
<div class="a" style="left:451px;top:296px;width:179px;text-align:center;font-size:13px;color:#000;line-height:20px">21556<br>0<br>0</div>
<div class="a" style="left:630px;top:296px;width:63px;text-align:center;font-size:13px;color:#000;line-height:20px">6035,68<br>0<br>0</div>
<div class="a" style="left:837px;top:201px;width:3px;height:11px;overflow:hidden"><div class="a nw" style="left:0;top:-2px;font-size:13px;color:#333">H</div></div>
<!-- vertical scrollbar -->
<div class="a" style="left:840px;top:199px;width:16px;height:478px;background:#e3e7ee;border-left:1px solid #c6cdd6"></div>
<div class="a" style="left:841px;top:199px;width:15px;height:5px;background:#fff;border:1px solid #8e9aaa"></div>
<svg class="a" style="left:841px;top:204px" width="15" height="16"><path d="M2.5 10 L7.5 5 L12.5 10 Z" fill="#4a4f57"/></svg>
<div class="a" style="left:841px;top:220px;width:14px;height:420px;border:1px solid #98a2af;border-radius:2px;background:linear-gradient(90deg,#fbfcfd,#e9edf2 60%,#d6dce4)"></div>
<svg class="a" style="left:843px;top:425px" width="10" height="8"><g fill="#6b7480"><rect x="1" y="1" width="8" height="1"/><rect x="1" y="3" width="8" height="1"/><rect x="1" y="5" width="8" height="1"/><rect x="1" y="7" width="8" height="1"/></g></svg>
<svg class="a" style="left:841px;top:660px" width="15" height="16"><path d="M2.5 5.5 L12.5 5.5 L7.5 10.5 Z" fill="#4a4f57"/></svg>
<!-- sheet tab bar -->
<div class="a" style="left:40px;top:678px;width:816px;height:16px;background:linear-gradient(#e8ecf1,#dde2e9);border-top:1px solid #b3bcc8;border-bottom:1px solid #9fa9b5"></div>
<svg class="a" style="left:40px;top:679px" width="110" height="15">
<g fill="#3b4048">
<rect x="6" y="3" width="1.5" height="8"/><path d="M12.5 3 L8 7 L12.5 11 Z"/>
<path d="M26 3 L21.5 7 L26 11 Z"/>
<path d="M35.5 3 L40 7 L35.5 11 Z"/>
<path d="M49.5 3 L54 7 L49.5 11 Z"/><rect x="54.5" y="3" width="1.5" height="8"/>
</g>
<rect x="62" y="0" width="1" height="15" fill="#c4cbd4"/>
<path d="M69 15 L83 1 L100 1" fill="none" stroke="#9aa4b0" stroke-width="1"/>
</svg>
<div class="a nw" style="left:123px;top:680px;font-size:11px;color:#333">Л</div>
<!-- h scrollbar -->
<div class="a" style="left:737px;top:680px;width:18px;height:13px;border:1px solid #a7b0bc;border-radius:2px;background:linear-gradient(#f8f9fb,#e1e5eb)"></div>
<svg class="a" style="left:818px;top:679px" width="14" height="14"><path d="M5 3 L10 7 L5 11 Z" fill="#4a4f57"/></svg>
<div class="a" style="left:833px;top:680px;width:7px;height:13px;background:#fff;border:1px solid #8e9aaa"></div>
<!-- status bar -->
<div class="a" style="left:40px;top:694px;width:816px;height:22px;background:linear-gradient(#eef1f5,#dde2e8 50%,#cfd5dd);border-bottom:1px solid #aab3be"></div>
<div class="a nw" style="left:48px;top:698.5px;font-size:11.5px;color:#4a4f5a">Правка</div>
<div class="a" style="left:102px;top:696px;width:1px;height:19px;background:#b5bdc7"></div>
<div class="a" style="left:138px;top:696px;width:1px;height:19px;background:#b5bdc7"></div>
<svg class="a" style="left:111px;top:696px" width="18" height="16">
<rect x="2.5" y="3.5" width="13" height="11" fill="#fff" stroke="#4a6fb5"/>
<rect x="3" y="4" width="12" height="2" fill="#3c79d6"/>
<g fill="#6f8fcf"><rect x="5" y="8" width="3" height="1"/><rect x="9" y="8" width="5" height="1"/><rect x="5" y="10" width="3" height="1"/><rect x="9" y="10" width="5" height="1"/><rect x="5" y="12" width="3" height="1"/><rect x="9" y="12" width="5" height="1"/></g>
<circle cx="4.5" cy="4" r="3" fill="#e0421b"/>
</svg>
<svg class="a" style="left:620px;top:694px;overflow:visible" width="240" height="22">
<rect x="-21" y="2" width="1" height="19" fill="#b5bdc7"/>
<rect x="-12.5" y="6.5" width="12" height="9" fill="#6f757d"/>
<g fill="#fff"><rect x="-11" y="8" width="2.5" height="1.5"/><rect x="-7.5" y="8" width="2.5" height="1.5"/><rect x="-4" y="8" width="2.5" height="1.5"/><rect x="-11" y="10.5" width="2.5" height="1.5"/><rect x="-7.5" y="10.5" width="2.5" height="1.5"/><rect x="-4" y="10.5" width="2.5" height="1.5"/><rect x="-11" y="13" width="2.5" height="1.5"/><rect x="-7.5" y="13" width="2.5" height="1.5"/><rect x="-4" y="13" width="2.5" height="1.5"/></g>
<rect x="5.5" y="5.5" width="13" height="11" fill="#9aa0a7" stroke="#7a8088"/>
<rect x="8.5" y="7.5" width="7" height="7" fill="#fff" stroke="#8a9098" stroke-width=".8"/>
<g fill="#9aa0a7"><rect x="10" y="9" width="4" height=".8"/><rect x="10" y="10.8" width="4" height=".8"/><rect x="10" y="12.6" width="4" height=".8"/></g>
<rect x="24.5" y="5.5" width="13" height="11" fill="#c4c9cf" stroke="#6f757d"/>
<rect x="26" y="7" width="3" height="5" fill="#fff"/><rect x="30" y="7" width="3" height="5" fill="#fff"/>
<circle cx="92.5" cy="11" r="7.5" fill="#eef1f4" stroke="#c4cad2"/>
<rect x="88" y="10.5" width="9" height="1.5" fill="#b0b7c0"/>
<rect x="100" y="10.5" width="101" height="1" fill="#b7bec7"/>
<rect x="150" y="7" width="1" height="8" fill="#b7bec7"/>
<circle cx="208.5" cy="11" r="7.5" fill="#eef1f4" stroke="#c4cad2"/>
<rect x="204" y="10.5" width="9" height="1.5" fill="#b0b7c0"/><rect x="207.8" y="6.5" width="1.5" height="9" fill="#b0b7c0"/>
<g fill="#a7aeb7"><rect x="232" y="17" width="2" height="2"/><rect x="229" y="17" width="2" height="2"/><rect x="226" y="17" width="2" height="2"/><rect x="232" y="14" width="2" height="2"/><rect x="229" y="14" width="2" height="2"/><rect x="232" y="11" width="2" height="2"/></g>
</svg>
<div class="a nw" style="left:670px;top:699px;font-size:11.3px;color:#8c939c">100%</div>
<!-- dialog -->
<div class="a" style="left:127px;top:349px;width:610px;height:343px;border-radius:6px;background:linear-gradient(100deg,#d3dde8,#c8d3df 20%,#d8e1eb 35%,#c9d4e0 50%,#d7e0ea 65%,#cdd8e4 85%,#d5dee9);border:1px solid #565e68;box-shadow:0 0 6px rgba(0,0,0,.35)"></div>
<div class="a" style="left:128px;top:350px;width:608px;height:341px;border-radius:5px;border:1px solid rgba(255,255,255,.7)"></div>
<div class="a nw" style="left:135px;top:356px;font-size:12px;color:#1a1a2a">Аргументы функции</div>
<div class="a" style="left:654px;top:349px;width:76px;height:19px;border:1px solid #8594a6;border-top:none;border-radius:0 0 4px 4px;background:linear-gradient(#e2e9f2,#d0dbe8)"></div>
<div class="a" style="left:682px;top:349px;width:1px;height:18px;background:#8e9cad"></div>
<div class="a" style="left:134px;top:377px;width:596px;height:308px;background:#f0f0f0;border:1px solid #4e5a66;border-right-color:#b9c6d4;border-bottom-color:#b9c6d4"></div>
<!-- group box -->
<div class="a" style="left:141px;top:391px;width:581px;height:130px;border:1px solid #d5dfe5;border-radius:3px"></div>
<div class="a nw" style="left:144px;top:386px;padding:0 3px;background:#f0f0f0;font-size:11px;color:#000;transform:scaleX(.87);transform-origin:0 0">СЦЕПИТЬ</div>
<!-- args -->
<div class="a nw" style="left:200px;top:408px;width:67px;text-align:right;font-size:11px;font-weight:bold;letter-spacing:.6px;color:#000">Текст1</div>
<div class="a nw" style="left:200px;top:432px;width:67px;text-align:right;font-size:11px;color:#000">Текст2</div>
<div class="a nw" style="left:200px;top:455px;width:67px;text-align:right;font-size:11px;color:#000">Текст3</div>
<div class="a" style="left:276px;top:405px;width:192px;height:17px;background:#fff;border:1px solid #abadb3"></div>
<div class="a" style="left:276px;top:430px;width:192px;height:17px;background:#fff;border:1px solid #abadb3"></div>
<div class="a" style="left:276px;top:455px;width:192px;height:16px;background:#fff;border:1px solid #abadb3"></div>
<div class="a nw" style="left:279px;top:408px;font-size:11px;color:#000">B3</div>
<div class="a nw" style="left:279px;top:433px;font-size:11px;color:#000">C3</div>
<div class="a nw" style="left:478px;top:408px;font-size:11px;color:#000">=</div>
<div class="a nw" style="left:478px;top:433px;font-size:11px;color:#000">=</div>
<div class="a nw" style="left:478px;top:455px;font-size:11px;color:#000">=</div>
<div class="a nw" style="left:494px;top:408px;font-size:11px;color:#000">"Фамилия"</div>
<div class="a nw" style="left:494px;top:433px;font-size:11px;color:#000">"Имя"</div>
<div class="a nw" style="left:494px;top:455px;font-size:11px;font-weight:bold;color:#a0a0a0">строка</div>
<div class="a nw" style="left:478px;top:528px;font-size:11px;color:#000">=&nbsp;&nbsp; "ФамилияИмя"</div>
<div class="a nw" style="left:141px;top:544px;font-size:11.4px;color:#000">Объединяет несколько текстовых строк в одну.</div>
<div class="a nw" style="left:295px;top:568px;font-size:11px;font-weight:bold;letter-spacing:.75px;color:#000">Текст2:</div>
<div class="a nw" style="left:347px;top:568px;font-size:11px;line-height:12.7px;color:#000">текст1;текст2;... от 1 до 255 текстовых строк, которые следует<br>объединить в одну строку; могут быть строками, числами или ссылками<br>на отдельные ячейки.</div>
<div class="a" style="left:141px;top:617px;width:581px;height:1px;background:#d5dfe5"></div>
<div class="a nw" style="left:141px;top:631px;font-size:11px;color:#000">Значение:</div><div class="a nw" style="left:201px;top:631px;font-size:11px;color:#000">ФамилияИмя</div>
<div class="a nw" style="left:141px;top:660px;font-size:11px;color:#0066cc;text-decoration:underline">Справка по этой функции</div>
<div class="a nw" style="left:564px;top:654px;width:74px;height:22px;border:1px solid #3a8fd0;border-radius:3px;background:linear-gradient(#f4f4f4,#ececec 50%,#dedede 50%,#d3d3d3);box-shadow:inset 0 0 0 1px #9fdcf7;font-size:11px;text-align:center;line-height:20px;color:#000">OK</div>
<div class="a nw" style="left:648px;top:654px;width:74px;height:22px;border:1px solid #707070;border-radius:3px;background:linear-gradient(#f2f2f2,#ebebeb 50%,#dddddd 50%,#cfcfcf);font-size:11px;text-align:center;line-height:20px;color:#000">Отмена</div>

<svg class="a" style="left:0;top:0" width="896" height="756">
<defs>
<linearGradient id="gRef" x1="0" y1="0" x2="0" y2="1"><stop offset="0" stop-color="#fafafa"/><stop offset="1" stop-color="#dcdcdc"/></linearGradient>
</defs>
<text x="669" y="363" text-anchor="middle" font-family="Liberation Sans" font-weight="bold" font-size="14" fill="#fff" stroke="#3a4048" stroke-width="2.4" paint-order="stroke">?</text>
<path d="M702.5 354.5 L710.5 361.5 M710.5 354.5 L702.5 361.5" stroke="#3a4048" stroke-width="4.6" stroke-linecap="square"/>
<path d="M702.5 354.5 L710.5 361.5 M710.5 354.5 L702.5 361.5" stroke="#fff" stroke-width="2.4" stroke-linecap="square"/>
<g id="refb">
<rect x="446.5" y="405.5" width="21" height="16" rx="2" fill="url(#gRef)" stroke="#9a9a9a"/>
<rect x="449" y="408" width="16" height="11" fill="#fff" stroke="#6f8fcf" stroke-width=".8"/>
<rect x="449" y="408" width="16" height="2" fill="#3f6fd0"/>
<g fill="#8eaee6"><rect x="450" y="411.5" width="14" height="1"/><rect x="450" y="414" width="14" height="1"/><rect x="450" y="416.5" width="14" height="1"/><rect x="453" y="410" width="1" height="9"/></g>
<path d="M455 409.5 L462 416.5 M455 409.5 V414 M455 409.5 H459.5" stroke="#d6321c" stroke-width="2" fill="none"/>
</g>
<use href="#refb" y="25"/>
<use href="#refb" y="50"/>
</svg>
<style>
.rb{position:absolute;border:6px solid #fe0000;border-radius:13px;box-shadow:1px 2px 3px rgba(0,0,0,.45),inset 1px 2px 3px rgba(0,0,0,.45)}
.cc{position:absolute;border-radius:50%;background:radial-gradient(circle at 32% 25%,#ffb48c 0,#fa7f48 30%,#ee5424 60%,#d93c14 100%);box-shadow:1px 2px 3px rgba(0,0,0,.4),inset 0 0 0 1px rgba(190,50,20,.6);color:#fff;font-weight:bold;text-align:center;font-family:"Liberation Sans",sans-serif;text-shadow:0 0 1px #4a2010,0 0 1px #4a2010,0 0 1px #4a2010,1px 1px 1px rgba(60,20,10,.7)}
</style>
<div class="rb" style="left:61px;top:251px;width:116px;height:45px"></div>
<div class="rb" style="left:178px;top:248px;width:118px;height:52px"></div>
<div class="cc" style="left:76px;top:229px;width:38px;height:38px;font-size:24px;line-height:38px">1</div>
<div class="cc" style="left:225px;top:220px;width:39px;height:39px;font-size:24px;line-height:39px">2</div>
<div class="rb" style="left:219px;top:393px;width:265px;height:35px"></div>
<div class="rb" style="left:214px;top:423px;width:271px;height:33px"></div>
<div class="cc" style="left:232px;top:364px;width:39px;height:39px;font-size:24px;line-height:39px">1</div>
<div class="cc" style="left:193px;top:435px;width:38px;height:38px;font-size:24px;line-height:38px">2</div>
<div class="rb" style="left:547px;top:633px;width:100px;height:53px"></div>
<div class="cc" style="left:549px;top:612px;width:35px;height:35px;font-size:22px;line-height:35px">3</div>
</body></html>
